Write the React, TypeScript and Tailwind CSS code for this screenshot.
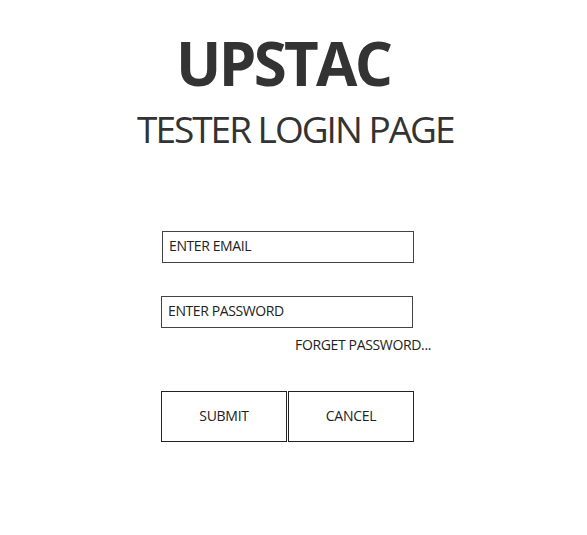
const App = () => {
  return (
    <div className="min-h-[535px] w-full bg-white font-['Open_Sans',sans-serif] text-[#333]">
      <div className="flex flex-col">
        <h1 className="mt-[25px] ml-[176px] text-[60px] leading-[76px] font-bold tracking-[-2.7px]">
          UPSTAC
        </h1>
        <h2 className="mt-[3px] ml-[137px] text-[37px] leading-[50px] font-normal tracking-[-2px]">
          TESTER LOGIN PAGE
        </h2>

        <input
          placeholder="ENTER EMAIL"
          className="mt-[77px] ml-[162px] h-[32px] w-[252px] border-[1.5px] border-[#444] px-[6px] pb-[4px] text-[14px] placeholder:text-[#222] tracking-[-0.4px] outline-none"
        />
        <input
          type="password"
          placeholder="ENTER PASSWORD"
          className="mt-[33px] ml-[161px] h-[32px] w-[252px] border-[1.5px] border-[#444] px-[6px] pb-[4px] text-[14px] placeholder:text-[#222] tracking-[-0.4px] outline-none"
        />
        <a className="mt-[8px] ml-[295px] text-[14px] leading-[18px] tracking-[-0.35px] text-[#222] cursor-pointer">
          FORGET PASSWORD...
        </a>

        <div className="mt-[37px] ml-[161px] flex gap-[1px]">
          <button className="h-[51px] w-[126px] border border-[#222] pb-[2px] text-[14px] tracking-[-0.3px] text-[#222]">
            SUBMIT
          </button>
          <button className="h-[51px] w-[126px] border border-[#222] pb-[2px] text-[14px] tracking-[-0.3px] text-[#222]">
            CANCEL
          </button>
        </div>
      </div>
    </div>
  );
};

export default App;
